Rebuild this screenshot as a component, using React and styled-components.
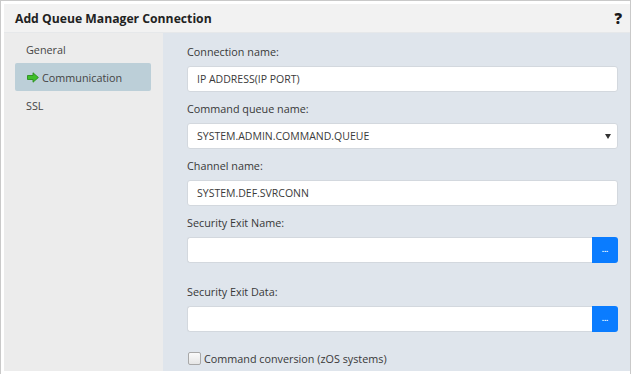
import styled, { createGlobalStyle } from "styled-components";

const GlobalStyle = createGlobalStyle`
  html, body {
    margin: 0;
    padding: 0;
    background: #ffffff;
  }
  body {
    font-family: "Open Sans", "Noto Sans", sans-serif;
  }
`;

// Outer window frame
const Frame = styled.div`
  width: 631px;
  height: 374px;
  box-sizing: border-box;
  border: 1px solid #c9c9c9;
  border-bottom: none;
  padding: 3px 0 0 3px;
  background: #fff;
`;

const Panel = styled.div`
  width: 626px;
  height: 367px;
  display: flex;
  flex-direction: column;
`;

const Header = styled.div`
  height: 29px;
  flex-shrink: 0;
  background: #f2f2f2;
  border-bottom: 1px solid #e6e8ea;
  display: flex;
  align-items: center;
  justify-content: space-between;
  padding: 0 8px 0 11px;
  box-sizing: border-box;
`;

const Title = styled.h1`
  margin: 0;
  font-size: 12.2px;
  font-weight: 700;
  color: #222;
`;

const Help = styled.span`
  font-size: 15px;
  font-weight: 800;
  color: #1a1a1a;
`;

const Body = styled.div`
  flex: 1;
  display: flex;
`;

const Sidebar = styled.nav`
  width: 159px;
  flex-shrink: 0;
  background: #ececec;
  padding-top: 2px;
  box-sizing: border-box;
`;

const NavItem = styled.div`
  height: 28px;
  margin: 0 12px 0 11px;
  padding-left: ${(p) => (p.active ? "12px" : "11px")};
  display: flex;
  align-items: center;
  gap: 3px;
  font-size: 10.8px;
  color: #444;
  border-radius: 2px;
  background: ${(p) => (p.active ? "#bccfd8" : "transparent")};
`;

const Content = styled.div`
  flex: 1;
  background: #dfe5ec;
  padding: 11px 12px 0 24px;
  box-sizing: border-box;
`;

const Field = styled.div`
  margin-bottom: ${(p) => (p.wide ? "21px" : "9px")};
`;

const Label = styled.div`
  height: 16px;
  line-height: 16px;
  margin-bottom: 6px;
  font-size: 10.8px;
  color: #383838;
`;

const Input = styled.div`
  height: 26px;
  box-sizing: border-box;
  border: 1px solid #d3d8de;
  border-radius: 3px;
  background: #fff;
  display: flex;
  align-items: center;
  padding: 0 9px;
  font-size: 10.5px;
  color: #3a3a3a;
  position: relative;
`;

const Caret = styled.span`
  position: absolute;
  right: 6px;
  top: 10px;
  width: 0;
  height: 0;
  border-left: 3px solid transparent;
  border-right: 3px solid transparent;
  border-top: 5px solid #333;
`;

const Group = styled.div`
  display: flex;
`;

const GroupInput = styled(Input)`
  flex: 1;
  border-radius: 3px 0 0 3px;
  border-right: none;
`;

const BrowseButton = styled.button`
  width: 26px;
  height: 26px;
  border: none;
  border-radius: 0 3px 3px 0;
  background: #0a7cff;
  color: #fff;
  font-size: 8px;
  font-weight: 700;
  padding: 0 0 9px;
  line-height: 1;
  display: flex;
  align-items: flex-end;
  justify-content: center;
`;

const CheckRow = styled.label`
  display: flex;
  align-items: center;
  gap: 3px;
  margin: -2px 0 0 1px;
  font-size: 10.8px;
  color: #383838;
`;

const Box = styled.span`
  width: 11px;
  height: 11px;
  border: 1px solid #a8a8a8;
  border-radius: 2px;
  background: linear-gradient(#fafafa, #e6e6e6);
`;

const Arrow = () => (
  <svg width="12" height="11" viewBox="0 0 12 11">
    <path
      d="M0.5 3.5 H6 V0.8 L11.4 5.5 L6 10.2 V7.5 H0.5 Z"
      fill="#3fbf2a"
      stroke="#2a8f1d"
      strokeWidth="0.9"
      strokeLinejoin="round"
    />
  </svg>
);

export default function App() {
  return (
    <>
      <GlobalStyle />
      <Frame>
        <Panel>
          <Header>
            <Title>Add Queue Manager Connection</Title>
            <Help>?</Help>
          </Header>
          <Body>
            <Sidebar>
              <NavItem>General</NavItem>
              <NavItem active>
                <Arrow />
                Communication
              </NavItem>
              <NavItem>SSL</NavItem>
            </Sidebar>
            <Content>
              <Field>
                <Label>Connection name:</Label>
                <Input>IP ADDRESS(IP PORT)</Input>
              </Field>
              <Field>
                <Label>Command queue name:</Label>
                <Input>
                  SYSTEM.ADMIN.COMMAND.QUEUE
                  <Caret />
                </Input>
              </Field>
              <Field>
                <Label>Channel name:</Label>
                <Input>SYSTEM.DEF.SVRCONN</Input>
              </Field>
              <Field wide>
                <Label>Security Exit Name:</Label>
                <Group>
                  <GroupInput />
                  <BrowseButton>...</BrowseButton>
                </Group>
              </Field>
              <Field wide>
                <Label>Security Exit Data:</Label>
                <Group>
                  <GroupInput />
                  <BrowseButton>...</BrowseButton>
                </Group>
              </Field>
              <CheckRow>
                <Box />
                Command conversion (zOS systems)
              </CheckRow>
            </Content>
          </Body>
        </Panel>
      </Frame>
    </>
  );
}
